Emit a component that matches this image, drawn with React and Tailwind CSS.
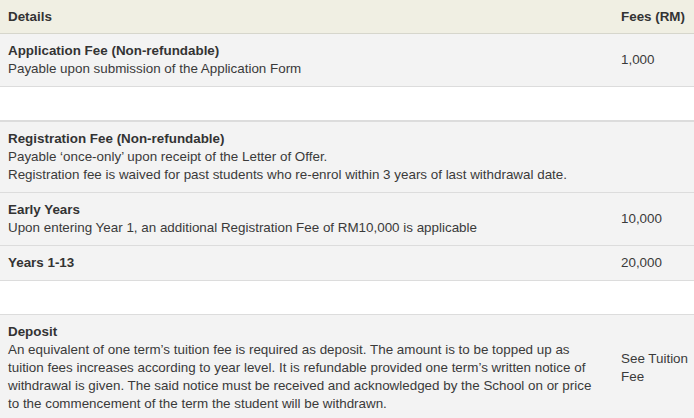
import React from 'react';

const rows = [
  {
    title: 'Application Fee (Non-refundable)',
    lines: ['Payable upon submission of the Application Form'],
    fee: '1,000',
  },
  { spacer: true, h: 'h-[34px] border-b-2' },
  {
    title: 'Registration Fee (Non-refundable)',
    lines: [
      'Payable \u2018once-only\u2019 upon receipt of the Letter of Offer.',
      'Registration fee is waived for past students who re-enrol within 3 years of last withdrawal date.',
    ],
    fee: '',
  },
  {
    title: 'Early Years',
    lines: ['Upon entering Year 1, an additional Registration Fee of RM10,000 is applicable'],
    fee: '10,000',
  },
  { title: 'Years 1-13', lines: [], fee: '20,000' },
  { spacer: true, h: 'h-[34px] border-b' },
  {
    title: 'Deposit',
    lines: [
      'An equivalent of one term\u2019s tuition fee is required as deposit. The amount is to be topped up as tuition fees increases according to year level. It is refundable provided one term\u2019s written notice of withdrawal is given. The said notice must be received and acknowledged by the School on or price to the commencement of the term the student will be withdrawn.',
    ],
    fee: 'See Tuition Fee',
  },
];

export default function App() {
  return (
    <div className="w-[694px] h-[418px] overflow-hidden bg-white font-['Liberation_Sans',Arial,sans-serif] text-[13.4px] leading-[18px] text-[#3a3a3a]">
      <table className="w-full table-fixed border-collapse">
        <colgroup>
          <col className="w-[613px]" />
          <col />
        </colgroup>
        <thead>
          <tr className="bg-[#f0efe3] border-b border-[#d6d6cc]">
            <th className="text-left font-bold text-[#333] px-2 pt-[8px] pb-[7px]">Details</th>
            <th className="text-left font-bold text-[#333] pl-2 pr-0 pt-[8px] pb-[7px] whitespace-nowrap">Fees (RM)</th>
          </tr>
        </thead>
        <tbody>
          {rows.map((r, i) =>
            r.spacer ? (
              <tr key={i} className={`bg-white border-[#dcdcdc] ${r.h}`}>
                <td colSpan={2}></td>
              </tr>
            ) : (
              <tr key={i} className="bg-[#f3f3f3] border-b border-[#dcdcdc]">
                <td className="pl-2 pr-3 py-2 align-top">
                  <div className="font-bold text-[#333]">{r.title}</div>
                  {r.lines.map((l, j) => (
                    <div key={j}>{l}</div>
                  ))}
                </td>
                <td className="pl-2 pr-1 py-2 align-middle">{r.fee}</td>
              </tr>
            )
          )}
        </tbody>
      </table>
    </div>
  );
}
